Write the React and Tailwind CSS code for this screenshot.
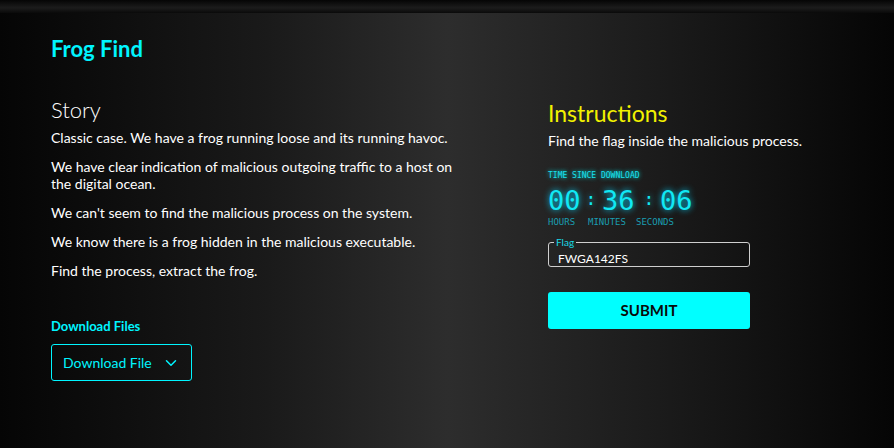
import React, { useState } from "react";
import { FiChevronDown } from "react-icons/fi";

const story = [
  "Classic case. We have a frog running loose and its running havoc.",
  "We have clear indication of malicious outgoing traffic to a host on the digital ocean.",
  "We can't seem to find the malicious process on the system.",
  "We know there is a frog hidden in the malicious executable.",
  "Find the process, extract the frog.",
];

const Timer = () => (
  <div className="mt-[22px] font-['DejaVu_Sans_Mono',monospace]">
    <div className="text-[8px] leading-[10px] text-[#19e0ef] [text-shadow:0_0_4px_#00ffff]">
      TIME SINCE DOWNLOAD
    </div>
    <div className="mt-[6px] flex items-center text-[27px] leading-[28px] text-[#11e8f4] [text-shadow:0_0_6px_#00d5ff]">
      <span className="w-[36px]">00</span>
      <span className="mt-[-4px] w-[18px] pr-[4px] text-center text-[18px] leading-[20px]">:</span>
      <span className="w-[40px]">36</span>
      <span className="mt-[-4px] w-[18px] pr-[4px] text-center text-[18px] leading-[20px]">:</span>
      <span>06</span>
    </div>
    <div className="mt-[2px] flex text-[9px] leading-[10px] text-[#1a9db0]">
      <span className="w-[40px]">HOURS</span>
      <span className="w-[48px]">MINUTES</span>
      <span>SECONDS</span>
    </div>
  </div>
);

export default function App() {
  const [flag, setFlag] = useState("FWGA142FS");

  return (
    <div className="h-[448px] w-[894px] overflow-hidden bg-[linear-gradient(90deg,#050505_0%,#1a1a1a_30%,#2d2d2d_50%,#1a1a1a_75%,#050505_100%)] font-['Lato',sans-serif] text-white">
      {/* top strip */}
      <div className="h-[13px] bg-[linear-gradient(180deg,#050505,#1c1c1c_60%,#0a0a0a)]"></div>

      <div className="px-[51px] pt-[23px]">
        <h1 className="text-[22px] font-bold leading-[26px] text-[#00f5ff]">Frog Find</h1>

        <div className="mt-[35px] flex">
          {/* Story */}
          <div className="w-[497px] flex-none">
            <h2 className="text-[22px] font-light leading-[26px]">Story</h2>
            <div className="mt-[6px] w-[420px] text-[14px] leading-[17px]">
              {story.map((p, i) => (
                <p key={i} className="mb-[12px]">
                  {p}
                </p>
              ))}
            </div>

            <div className="mt-[39px] text-[13px] font-bold leading-[16px] text-[#00f5ff]">
              Download Files
            </div>
            <button className="mt-[10px] flex h-[37px] w-[141px] items-center justify-between rounded-[3px] border border-[#00f5ff] px-[11px] text-[14px] text-[#00f5ff]">
              Download File
              <FiChevronDown className="text-[18px]" />
            </button>
          </div>

          {/* Instructions */}
          <div className="pt-[3px]">
            <h2 className="text-[23px] font-normal leading-[26px] text-[#f2f200]">Instructions</h2>
            <p className="mt-[6px] text-[14px] leading-[17px]">
              Find the flag inside the malicious process.
            </p>

            <Timer />

            <fieldset className="mt-[12px] h-[28px] w-[202px] rounded-[3px] border border-[#cfcfcf] px-[9px]">
              <legend className="ml-[-4px] px-[2px] text-[10px] leading-[6px] text-[#19d9e6]">Flag</legend>
              <input
                value={flag}
                onChange={(e) => setFlag(e.target.value)}
                className="mt-[-1px] w-full bg-transparent text-[12px] leading-[16px] text-white outline-none"
              />
            </fieldset>

            <button className="mt-[25px] h-[37px] w-[202px] rounded-[3px] bg-[#00ffff] text-[15px] font-bold text-[#0a0a0a]">
              SUBMIT
            </button>
          </div>
        </div>
      </div>
    </div>
  );
}
